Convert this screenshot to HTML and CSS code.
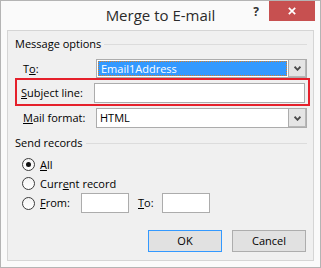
FILE: index.html
```html
<!DOCTYPE html>
<html>
<head>
<meta charset="utf-8">
<title>Merge to E-mail</title>
<link rel="stylesheet" href="styles.css">
</head>
<body>
<div class="window">
  <div class="titlebar">
    <div class="title">Merge to E-mail</div>
    <div class="controls">
      <div class="help">?</div>
      <div class="close">
        <svg width="8" height="8" viewBox="0 0 8 8"><path d="M0.8 0.8 L7.2 7.2 M7.2 0.8 L0.8 7.2" stroke="#fff" stroke-width="1.7" fill="none"/></svg>
      </div>
    </div>
  </div>
  <div class="panel">
    <div class="group-head"><span>Message options</span><span class="rule"></span></div>
    <div class="field-row row-to">
      <span class="lbl">T<u>o</u>:</span>
      <div class="combo">
        <div class="combo-field"><div class="selected">Email1Address</div></div>
        <div class="combo-btn"><svg width="7" height="5" viewBox="0 0 7 5"><path d="M0.6 0.7 L3.5 3.8 L6.4 0.7" stroke="#4a4a4a" stroke-width="1.8" fill="none"/></svg></div>
      </div>
    </div>
    <div class="field-row highlight">
      <span class="lbl"><u>S</u>ubject line:</span>
      <div class="textbox wide"></div>
    </div>
    <div class="field-row row-format">
      <span class="lbl"><u>M</u>ail format:</span>
      <div class="combo tall">
        <div class="combo-field"><div class="value">HTML</div></div>
        <div class="combo-btn"><svg width="7" height="5" viewBox="0 0 7 5"><path d="M0.6 0.7 L3.5 3.8 L6.4 0.7" stroke="#4a4a4a" stroke-width="1.8" fill="none"/></svg></div>
      </div>
    </div>
    <div class="group-head second"><span>Send records</span><span class="rule"></span></div>
    <div class="radios">
      <div class="radio-row"><span class="radio checked"><span class="dot"></span></span><span class="rtext"><u>A</u>ll</span></div>
      <div class="radio-row"><span class="radio"></span><span class="rtext">Curr<u>e</u>nt record</span></div>
      <div class="radio-row from-row">
        <span class="radio"></span><span class="rtext from-lbl"><u>F</u>rom:</span>
        <div class="textbox small"></div>
        <span class="to-lbl"><u>T</u>o:</span>
        <div class="textbox small"></div>
      </div>
    </div>
    <div class="buttons">
      <div class="btn default">OK</div>
      <div class="btn">Cancel</div>
    </div>
  </div>
</div>
</body>
</html>
```

FILE: styles.css
```css
* {
  box-sizing: border-box;
  margin: 0;
  padding: 0;
}

html, body {
  width: 321px;
  height: 268px;
  overflow: hidden;
}

body {
  font-family: "Open Sans", "Noto Sans", sans-serif;
  font-size: 11px;
  color: #000;
  background: #fafafa;
}

u {
  text-decoration: underline;
  text-underline-offset: 1px;
}

.window {
  width: 321px;
  height: 268px;
  border: 1px solid #b4b4b4;
  background: #fafafa;
  display: flex;
  flex-direction: column;
}

.titlebar {
  height: 29px;
  flex: none;
  display: grid;
  grid-template-columns: 1fr auto 1fr;
}

.title {
  grid-column: 2;
  font-size: 15px;
  line-height: 20px;
  padding-top: 4px;
  color: #2b2b2b;
  white-space: nowrap;
}

.controls {
  grid-column: 3;
  display: flex;
  justify-content: flex-end;
  align-items: flex-start;
  padding-right: 5px;
}

.help {
  font-size: 12px;
  font-weight: bold;
  line-height: 14px;
  margin-top: 4px;
  margin-right: 10px;
  color: #333;
}

.close {
  width: 46px;
  height: 20px;
  background: #c75050;
  display: flex;
  align-items: center;
  justify-content: center;
}

.panel {
  margin: 0 6px 6px 6px;
  height: 231px;
  border: 1px solid #d5d5d5;
  background: #f0f0f0;
  padding: 6px 6px 0 7px;
  display: flex;
  flex-direction: column;
}

.group-head {
  height: 14px;
  line-height: 14px;
  display: flex;
  align-items: center;
  white-space: nowrap;
}

.group-head .rule {
  flex: 1;
  height: 1px;
  background: #dcdcdc;
  margin-left: 3px;
}

.group-head.second {
  margin-top: 8px;
}

.field-row {
  display: flex;
  align-items: center;
  line-height: 14px;
}

.lbl {
  width: 73px;
  margin-left: 8px;
  flex: none;
  white-space: nowrap;
}

.row-to {
  margin-top: 8px;
  height: 19px;
}

.highlight {
  width: 295px;
  height: 28px;
  border: 2px solid #e5202b;
  align-items: flex-start;
  padding-top: 3px;
}

.highlight .lbl {
  margin-left: 4px;
  line-height: 20px;
}

.row-format {
  margin-top: 2px;
  height: 20px;
}

.combo {
  width: 211px;
  height: 19px;
  border: 1px solid #acacac;
  background: #fff;
  display: flex;
}

.combo.tall {
  height: 20px;
}

.combo-field {
  flex: 1;
  padding: 1px;
  display: flex;
}

.selected {
  flex: 1;
  background: #3399ff;
  color: #fff;
  border: 1px dotted #d9822b;
  padding-left: 2px;
  line-height: 13px;
  white-space: nowrap;
}

.value {
  padding-left: 2px;
  line-height: 16px;
}

.combo-btn {
  width: 18px;
  background: #e5e5e5;
  border-left: 1px solid #acacac;
  box-shadow: inset -1px -1px 0 #b8b8b8;
  display: flex;
  align-items: center;
  justify-content: center;
}

.textbox {
  height: 20px;
  background: #fff;
  border: 1px solid #acacac;
  flex: none;
}

.textbox.wide {
  width: 211px;
}

.textbox.small {
  width: 48px;
}

.radios {
  margin-top: 5px;
  display: flex;
  flex-direction: column;
}

.radio-row {
  height: 19px;
  display: flex;
  align-items: center;
  line-height: 14px;
  white-space: nowrap;
}

.radio-row.from-row {
  height: 20px;
}

.radio {
  width: 13px;
  height: 13px;
  margin-left: 7px;
  border-radius: 50%;
  border: 1px solid #3c3c3c;
  background: linear-gradient(#f4f4f4, #ffffff);
  display: flex;
  align-items: center;
  justify-content: center;
  flex: none;
}

.dot {
  width: 5px;
  height: 5px;
  border-radius: 50%;
  background: #111;
}

.rtext {
  margin-left: 5px;
}

.from-lbl {
  width: 41px;
}

.to-lbl {
  margin-left: 9px;
  width: 24px;
}

.buttons {
  margin-top: 17px;
  display: flex;
  justify-content: flex-end;
  gap: 10px;
  padding-right: 1px;
}

.btn {
  width: 74px;
  height: 22px;
  background: #e1e1e1;
  border: 1px solid #adadad;
  display: flex;
  align-items: center;
  justify-content: center;
  line-height: 14px;
}

.btn.default {
  border-color: #3399ff;
}
```
